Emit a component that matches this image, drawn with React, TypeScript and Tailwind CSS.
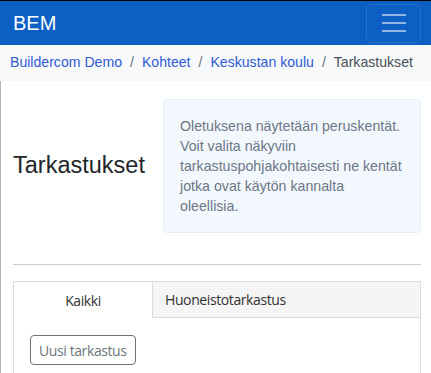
import { useState } from 'react';

const crumbs = ['Buildercom Demo', 'Kohteet', 'Keskustan koulu'];

export default function App() {
  const [tab, setTab] = useState(0);

  return (
    <div className="min-h-screen bg-white border-t border-black font-['Liberation_Sans',Arial,sans-serif]">
      {/* Navbar */}
      <nav className="h-[44px] bg-[#0c5fc3] flex items-center justify-between pl-[13px] pr-[10px]">
        <span className="text-white text-[20px] leading-none">BEM</span>
        <button className="w-[55px] h-[39px] rounded-[5px] border border-white/10 flex flex-col items-center justify-center gap-[6px]">
          <span className="block w-[24px] h-[2px] bg-white/55" />
          <span className="block w-[24px] h-[2px] bg-white/55" />
          <span className="block w-[24px] h-[2px] bg-white/55" />
        </button>
      </nav>

      {/* Breadcrumb */}
      <div className="h-[36px] bg-[#f8f9fa] flex items-center pl-[10px] text-[14.1px]">
        {crumbs.map((c) => (
          <span key={c} className="flex items-center">
            <a className="text-[#2f5bd6]">{c}</a>
            <span className="px-[8px] text-[#6c757d]">/</span>
          </span>
        ))}
        <span className="text-[#495057]">Tarkastukset</span>
      </div>

      <div className="border-l border-[#b5b5b5] pl-[12px] pr-[10px]">
        {/* Header row */}
        <div className="flex items-center pt-[18px]">
          <h1 className="w-[150px] text-[23.5px] text-[#212529]">Tarkastukset</h1>
          <div className="w-[258px] rounded-[4px] border border-[#e6eef8] bg-[#f3f8ff] pl-[16px] pr-[12px] py-[16px] text-[14.2px] leading-[20px] text-[#6b7785]">
            Oletuksena näytetään peruskentät. Voit valita näkyviin tarkastuspohjakohtaisesti ne kentät jotka ovat käytön kannalta
            <br />
            oleellisia.
          </div>
        </div>

        <hr className="mt-[31px] border-0 border-t border-[#cccccc]" />

        {/* Tabs */}
        <div className="mt-[16px] border border-[#dddddd] border-b-0 font-['Open_Sans',sans-serif] text-[14px] tracking-[-0.4px]">
          <div className="flex h-[36px]">
            {['Kaikki', 'Huoneistotarkastus'].map((t, i) => (
              <button
                key={t}
                onClick={() => setTab(i)}
                className={
                  tab === i
                    ? 'w-[138px] bg-white text-[#333] flex items-center justify-center'
                    : 'flex-1 bg-[#f5f5f5] border-l border-b border-[#dddddd] text-[#333] flex items-center pl-[12px]'
                }
              >
                {t}
              </button>
            ))}
          </div>
          <div className="pt-[17px] pl-[16px] pb-[8px]">
            <button className="h-[30px] px-[8px] rounded-[4px] border border-[#6c757d] text-[#6c757d] bg-white">
              Uusi tarkastus
            </button>
          </div>
        </div>
      </div>
    </div>
  );
}
